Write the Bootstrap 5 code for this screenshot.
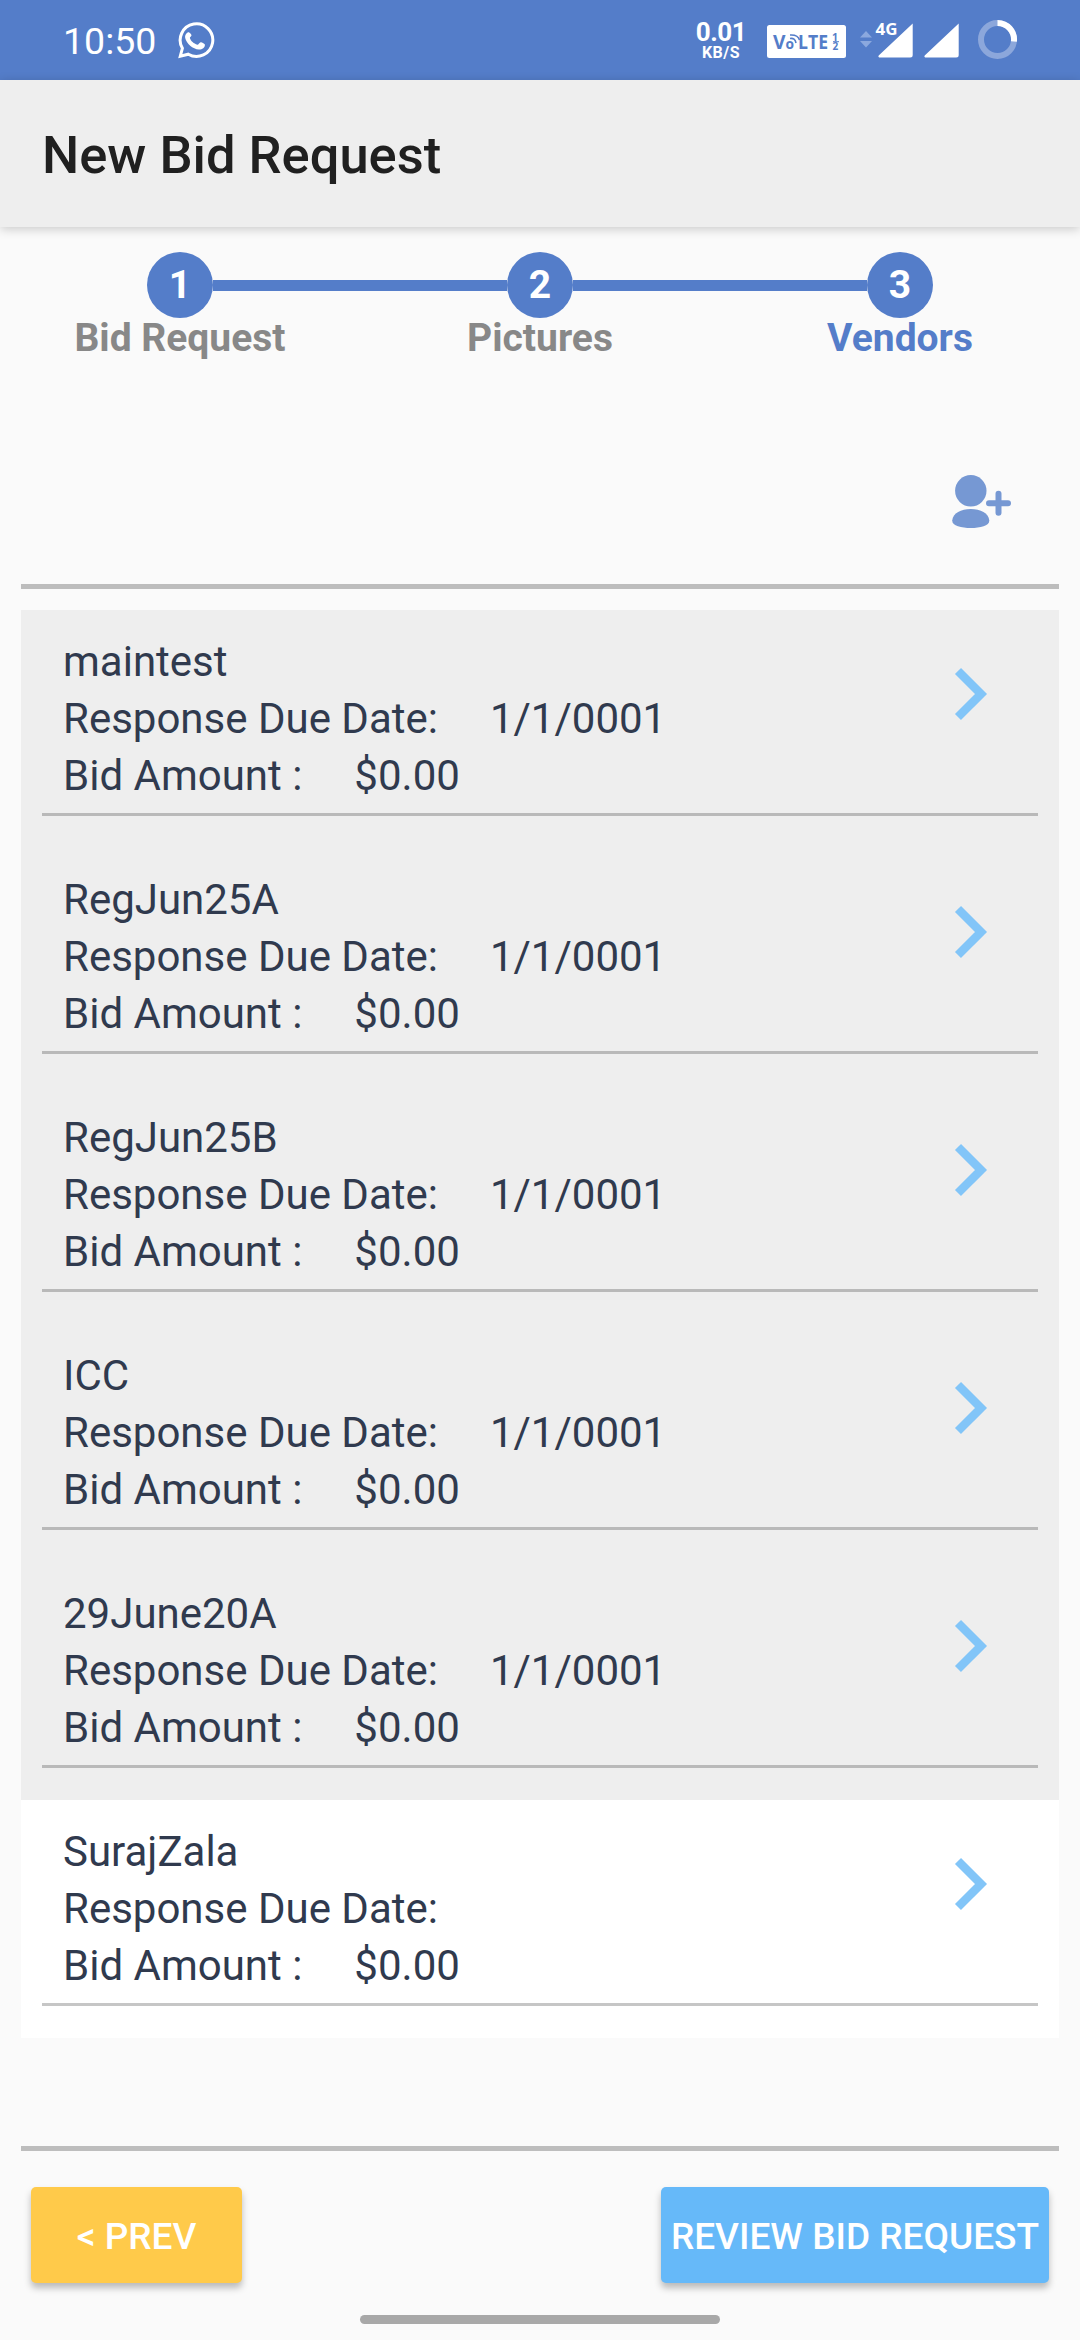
<!DOCTYPE html>
<html lang="en">
<head>
<meta charset="utf-8">
<meta name="viewport" content="width=device-width, initial-scale=1">
<title>New Bid Request</title>
<link href="https://cdn.jsdelivr.net/npm/bootstrap@5.3.0/dist/css/bootstrap.min.css" rel="stylesheet">
<style>
  body { font-family: Roboto, "Liberation Sans", sans-serif; background: #fafafa; height: 2340px; overflow: hidden; color: #303a4e; }
  svg { display: block; flex: none; }
  .statusbar { height: 80px; background: #547dc9; color: #fff; padding-left: 63px; padding-right: 62px; }
  .clock { font-size: 37.5px; line-height: 44px; width: 114px; padding-top: 2px; }
  .netrate { width: 46px; font-weight: 700; margin-right: 22px; padding-bottom: 2px; }
  .netrate-num { font-size: 26px; line-height: 26px; letter-spacing: -.4px; }
  .netrate-unit { font-size: 16px; line-height: 15px; letter-spacing: .5px; }
  .appbar { height: 147px; background: #eee; padding-left: 42px; box-shadow: 0 2px 10px rgba(0,0,0,.2); z-index: 1; }
  .appbar h1 { font-size: 52.5px; font-weight: 500; color: #202020; line-height: 62px; padding-top: 3px; }
  .steps { height: 190px; padding-top: 25px; }
  .step-item { width: 360px; font-weight: 700; }
  .step-dot { width: 66px; height: 66px; background: #547dc9; color: #fff; font-size: 39px; line-height: 1; }
  .step-bar { height: 11px; background: #547dc9; }
  .step-label { font-size: 39px; line-height: 46px; margin-top: -3px; color: #888; }
  .step-label.current { color: #547dc9; }
  .rule { height: 5px; background: #bdbdbd; margin: 0 21px; }
  .tools { height: 167px; padding: 57px 67px 0 0; }
  .vendors { margin: 21px 21px 0; }
  .bottom-rule { margin-top: 108px; }
  .vendor { height: 238px; background: #eee; padding: 23px 21px 0; font-size: 42px; line-height: 57px; }
  .vendor.plain { background: #fff; }
  .vendor-body { height: 183px; border-bottom: 3px solid #b9b9b9; padding-left: 21px; padding-right: 50px; }
  .plain .vendor-body { border-color: #c6c6c6; }
  .vendor-gap { margin-left: 52px; }
  .chev { margin-top: 34px; }
  .actions { padding: 36px 31px 0; }
  .act { height: 96px; border: 0; border-radius: 5px; color: #fff; font-size: 37px; font-weight: 500; line-height: 1; padding: 2px 0 0; box-shadow: 0 5px 7px rgba(0,0,0,.26); white-space: nowrap; }
  .act-prev { width: 211px; background: #ffca4a; }
  .act-next { width: 388px; background: #66b9f9; }
  .homebar { width: 360px; height: 9px; background: #a8a8a8; border-radius: 5px; margin-top: 32px; }
</style>
</head>
<body>
<div class="statusbar d-flex align-items-center">
  <div class="clock">10:50</div>
  <svg width="40" height="40" viewBox="177 20 40 40" fill="none"><path d="M180.300 56.200L182.400 48.300A16.300 16.300 0 1 1 188.300 54.200Z" stroke="#fff" stroke-width="3"/><path d="M189.200 32.400c-1.500-.8-4.700 2-4 5.500 1.200 5.600 7.600 11 13.700 11.700 3 .2 6.200-1.800 6-4.800-.1-1-3.600-2.800-4.600-2.400-1.200.5-1.800 2.500-3 2.300-3.400-.9-6.600-3.700-7.400-6.600-.2-1 1.600-1.800 1.600-2.800-.1-1-1.400-2.500-2.300-2.900z" fill="#fff"/></svg>
  <div class="netrate ms-auto d-flex flex-column align-items-center"><div class="netrate-num">0.01</div><div class="netrate-unit">KB/S</div></div>
  <svg width="195" height="80" viewBox="766 0 195 80" font-family="Open Sans, sans-serif" font-weight="700">
    <rect x="767" y="25" width="79" height="33" rx="2.500" fill="#fff"/>
    <g fill="#547dc9">
      <text x="773" y="49" font-size="19" textLength="12.500" lengthAdjust="spacingAndGlyphs">V</text>
      <text x="785.500" y="49" font-size="14" textLength="8.500" lengthAdjust="spacingAndGlyphs">o</text>
      <text x="798" y="49" font-size="19" textLength="30" lengthAdjust="spacingAndGlyphs">LTE</text>
      <text x="832" y="41" font-size="10.500">1</text>
      <text x="832.500" y="49.500" font-size="10">2</text>
      <path d="M833 41.700h6" stroke="#547dc9" stroke-width="1"/>
    </g>
    <path d="M790 38.500q5-1 6 4.500M790 35q8-.5 9.500 5" fill="none" stroke="#547dc9" stroke-width="1.600"/>
    <path d="M866 31l6 6.500h-12zM860 41h12l-6 6.500z" fill="#8ba8de"/>
    <text x="875.500" y="35" font-size="16.500" fill="#fff" textLength="22" lengthAdjust="spacingAndGlyphs">4G</text>
    <path d="M912.700 23.500v31.500q0 2.500-2.500 2.500h-31q-1.500-.5-.5-2zM958.700 23.500v31.500q0 2.500-2.500 2.500h-31q-1.500-.5-.5-2z" fill="#fff"/>
  </svg>
  <svg style="margin-left:17px" width="40" height="40" viewBox="0 0 40 40" fill="none" stroke-width="6"><circle cx="19.500" cy="19.500" r="16.500" stroke="#8ca7db"/><path d="M19.500 3A16.500 16.500 0 0 1 35.900 21.500" stroke="#fff"/></svg>
</div>
<header class="appbar d-flex align-items-center position-relative"><h1 class="m-0">New Bid Request</h1></header>
<div class="steps d-flex">
  <div class="step-item">
    <div class="d-flex align-items-center"><div class="flex-fill"></div><div class="step-dot rounded-circle d-flex align-items-center justify-content-center">1</div><div class="step-bar flex-fill"></div></div>
    <div class="step-label text-center">Bid Request</div>
  </div>
  <div class="step-item">
    <div class="d-flex align-items-center"><div class="step-bar flex-fill"></div><div class="step-dot rounded-circle d-flex align-items-center justify-content-center">2</div><div class="step-bar flex-fill"></div></div>
    <div class="step-label text-center">Pictures</div>
  </div>
  <div class="step-item">
    <div class="d-flex align-items-center"><div class="step-bar flex-fill"></div><div class="step-dot rounded-circle d-flex align-items-center justify-content-center">3</div><div class="flex-fill"></div></div>
    <div class="step-label text-center current">Vendors</div>
  </div>
</div>
<div class="tools d-flex justify-content-end">
  <svg width="62" height="56" viewBox="951 474 62 56" fill="#7698d3"><circle cx="970.800" cy="490.800" r="15.700"/><path d="M952.200 520.500C953 513 961 509 970.800 509S988.500 513 989.300 520.500C989.500 526 980 528 970.800 528S952 526 952.200 520.500z"/><path d="M998.500 493.700v19M989 503.200h19" stroke="#7698d3" stroke-width="6" stroke-linecap="round"/></svg>
</div>
<div class="rule"></div>
<main class="vendors" id="vendors"></main>
<div class="rule bottom-rule"></div>
<div class="actions d-flex justify-content-between">
  <button class="btn act act-prev">&lt; PREV</button>
  <button class="btn act act-next">REVIEW BID REQUEST</button>
</div>
<div class="homebar mx-auto"></div>
<script>
  const vendors = [["maintest","1/1/0001"],["RegJun25A","1/1/0001"],["RegJun25B","1/1/0001"],["ICC","1/1/0001"],["29June20A","1/1/0001"],["SurajZala",""]];
  document.getElementById("vendors").innerHTML = vendors.map(([name, due]) => `
    <section class="vendor ${due ? "" : "plain"}">
      <div class="vendor-body d-flex justify-content-between">
        <div>
          <div>${name}</div>
          <div class="d-flex"><span>Response Due Date:</span><span class="vendor-gap">${due}</span></div>
          <div class="d-flex"><span>Bid Amount :</span><span class="vendor-gap">$0.00</span></div>
        </div>
        <svg class="chev" width="34" height="54" viewBox="0 0 34 54"><path d="M4 4L27 27L4 50" fill="none" stroke="#82c5f8" stroke-width="8.500"/></svg>
      </div>
    </section>`).join("");
</script>
<script src="https://cdn.jsdelivr.net/npm/bootstrap@5.3.0/dist/js/bootstrap.bundle.min.js"></script>
</body>
</html>
